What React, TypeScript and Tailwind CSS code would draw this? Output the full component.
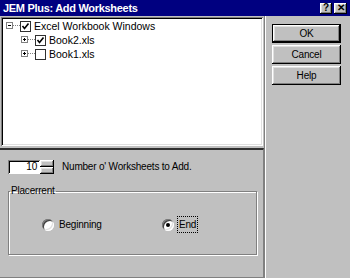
const raised =
  'shadow-[inset_-1px_-1px_#000,inset_1px_1px_#fff,inset_-2px_-2px_#808080,inset_2px_2px_#dfdfdf]'

function Check({ checked }: { checked: boolean }) {
  return (
    <div className="w-[11px] h-[11px] border border-[#303030] bg-white flex items-center justify-center">
      {checked && (
        <svg width="9" height="9" viewBox="0 0 9 9">
          <path d="M1.5 4 L3.5 6.5 L7.5 1.5" stroke="#000" strokeWidth="1.6" fill="none" />
        </svg>
      )}
    </div>
  )
}

function Expander({ open, x }: { open: boolean; x: number }) {
  return (
    <g>
      <rect x={x + 0.5} y={3.5} width={6} height={6} fill="#fff" stroke="#808080" />
      <line x1={x + 2} y1={6.5} x2={x + 5} y2={6.5} stroke="#000" />
      {!open && <line x1={x + 3.5} y1={5} x2={x + 3.5} y2={8} stroke="#000" />}
    </g>
  )
}

function TreeRow({ level, open, checked, label }: { level: number; open: boolean; checked: boolean; label: string }) {
  const x = level === 0 ? 3 : 18
  const w = level === 0 ? 17 : 32
  return (
    <div className="h-[14px] flex items-center">
      <svg width={w} height={14} viewBox={`0 0 ${w} 14`}>
        <Expander open={open} x={x} />
        <line x1={x + 7} y1={6.5} x2={w} y2={6.5} stroke="#808080" strokeDasharray="1 1" />
      </svg>
      <Check checked={checked} />
      <span className="ml-[3px] leading-none">{label}</span>
    </div>
  )
}

function Radio({ on, label, focus }: { on: boolean; label: string; focus?: boolean }) {
  return (
    <div className="flex items-center gap-[4px]">
      <div className="w-[12px] h-[12px] rounded-full bg-white shadow-[inset_1px_1px_#808080,inset_-1px_-1px_#fff,inset_2px_2px_#404040,inset_-2px_-2px_#dfdfdf] flex items-center justify-center">
        {on && <div className="w-[4px] h-[4px] rounded-full bg-black" />}
      </div>
      <span className={focus ? 'px-[1px] outline outline-1 outline-dotted outline-black' : 'px-[1px]'}>{label}</span>
    </div>
  )
}

export default function App() {
  return (
    <div className="w-[350px] h-[278px] bg-[#c0c0c0] flex flex-col overflow-hidden text-[10px] tracking-[-0.2px] text-black font-['Liberation_Sans',Arial,sans-serif]">
      <div className="h-[16px] bg-[#000080] flex items-center pl-[3px] pr-[3px]">
        <span className="text-white font-bold text-[11px] tracking-[-0.3px] leading-none">JEM Plus: Add Worksheets</span>
        <div className="ml-auto flex gap-[2px]">
          <div className={`w-[12px] h-[11px] bg-[#c0c0c0] ${raised} flex items-center justify-center font-bold text-[10px] leading-none`}>?</div>
          <div className={`w-[13px] h-[11px] bg-[#c0c0c0] ${raised} flex items-center justify-center font-bold text-[10px] leading-none`}>✕</div>
        </div>
      </div>

      <div className="flex flex-1">
        <div className="w-[264px] flex flex-col">
          <div className="mx-[1px] mt-[1px] h-[129px] bg-white shadow-[inset_1px_1px_#808080,inset_-1px_-1px_#fff,inset_2px_2px_#000,inset_-2px_-2px_#dfdfdf] pt-[2px] pl-[2px] text-[10.5px] tracking-normal">
            <TreeRow level={0} open checked label="Excel Workbook Windows" />
            <TreeRow level={1} open={false} checked label="Book2.xls" />
            <TreeRow level={1} open={false} checked={false} label="Book1.xls" />
          </div>

          <div className="mt-[2px] flex-1 border-t-2 border-t-[#303030] border-r border-r-[#808080] border-b border-b-[#808080] pt-[9px] pl-[8px] pr-[6px]">
            <div className="flex items-center">
              <div className="w-[32px] h-[14px] bg-white shadow-[inset_1px_1px_#808080,inset_-1px_-1px_#fff,inset_2px_2px_#000] flex items-center justify-end pr-[3px] leading-none">
                10
              </div>
              <div className="w-[14px] h-[14px] flex flex-col">
                <div className={`h-[7px] bg-[#c0c0c0] ${raised}`} />
                <div className={`h-[7px] bg-[#c0c0c0] ${raised}`} />
              </div>
              <span className="ml-[8px]">Number o' Worksheets to Add.</span>
            </div>

            <fieldset className="mt-[12px] h-[69px] w-[249px] border border-[#808080] shadow-[1px_1px_#fff,inset_1px_1px_#fff]">
              <legend className="ml-[1px] px-[1px] leading-none">Placerrent</legend>
              <div className="flex items-center mt-[21px] pl-[33px]">
                <div className="w-[120px]">
                  <Radio on={false} label="Beginning" />
                </div>
                <Radio on label="End" focus />
              </div>
            </fieldset>
          </div>
        </div>

        <div className="flex-1 border-l border-l-[#808080] shadow-[inset_1px_0_#fff] pl-[7px] pt-[8px] flex flex-col gap-[2px]">
          <button className={`w-[69px] h-[19px] bg-[#c0c0c0] border border-black ${raised}`}>OK</button>
          <button className={`w-[69px] h-[19px] bg-[#c0c0c0] ${raised}`}>Cancel</button>
          <button className={`w-[69px] h-[19px] bg-[#c0c0c0] ${raised}`}>Help</button>
        </div>
      </div>
    </div>
  )
}
